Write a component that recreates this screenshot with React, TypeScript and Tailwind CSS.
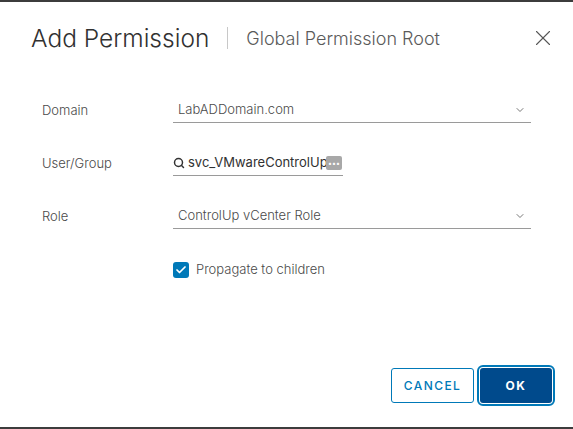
import { ChevronDown, Search, X, Check } from "lucide-react";

const font = { fontFamily: "Inter, 'Noto Sans', sans-serif" };

const SelectField = ({ value }: { value: string }) => (
  <div className="flex w-[358px] items-center justify-between border-b border-[#9a9a9a] py-[2px] pl-[5px] pr-[5px]">
    <span className="text-[13px] font-light text-[#4a4a4a]">{value}</span>
    <ChevronDown className="h-[12px] w-[12px] text-[#555]" strokeWidth={1.6} />
  </div>
);

const Row = ({ label, children }: { label: string; children: React.ReactNode }) => (
  <div className="flex h-[53px] items-center">
    <span className="w-[131px] text-[13px] font-light text-[#4a4a4a]">{label}</span>
    {children}
  </div>
);

export default function App() {
  return (
    <div className="flex h-[429px] w-[573px] flex-col bg-white" style={font}>
      <div className="h-[2px] bg-[#3c3c3c]" />
      <div className="flex flex-1 flex-col">
        <div className="flex items-center pl-[31px] pr-[17px] pt-[22px]">
          <h1 className="text-[24.5px] font-light leading-[28px] text-[#313131]">Add Permission</h1>
          <div className="mx-[18px] h-[22px] w-px bg-[#c8c8c8]" />
          <span className="text-[18px] font-light text-[#5a5a5a]">Global Permission Root</span>
          <X className="ml-auto h-[26px] w-[26px] text-[#565656]" strokeWidth={1} />
        </div>

        <div className="mt-[32px] flex flex-col pl-[42px]">
          <Row label="Domain">
            <SelectField value="LabADDomain.com" />
          </Row>
          <Row label="User/Group">
            <div className="relative flex w-[170px] items-center border-b border-[#9a9a9a] py-[2px]">
              <Search className="h-[12px] w-[12px] text-[#333]" strokeWidth={3} />
              <span className="ml-[3px] w-[150px] overflow-hidden whitespace-nowrap text-[13px] text-[#313131]">
                svc_VMwareControlUp
              </span>
              <span className="absolute right-[1px] top-[5px] flex h-[14px] w-[16px] items-center justify-center rounded-[2px] bg-[#a8a8a8] text-[7px] leading-none text-white">
                •••
              </span>
            </div>
          </Row>
          <Row label="Role">
            <SelectField value="ControlUp vCenter Role" />
          </Row>
          <div className="flex h-[53px] items-center pl-[131px]">
            <span className="flex h-[16px] w-[16px] items-center justify-center rounded-[3px] bg-[#0079b8]">
              <Check className="h-[12px] w-[12px] text-white" strokeWidth={3.5} />
            </span>
            <span className="ml-[7px] text-[13px] font-light text-[#4a4a4a]">Propagate to children</span>
          </div>
        </div>

        <div className="mt-auto flex justify-end gap-[6px] pb-[24px] pr-[21px]">
          <button className="h-[35px] w-[83px] rounded-[3px] border border-[#0079b8] text-[12px] font-medium tracking-[0.12em] text-[#0079b8]">
            CANCEL
          </button>
          <button className="h-[35px] w-[72px] rounded-[3px] bg-[#004a8c] text-[12px] font-bold tracking-[0.12em] text-white outline-2 outline-offset-[1px] outline-[#0079b8]">
            OK
          </button>
        </div>
      </div>
      <div className="h-[2px] bg-[#3c3c3c]" />
    </div>
  );
}
